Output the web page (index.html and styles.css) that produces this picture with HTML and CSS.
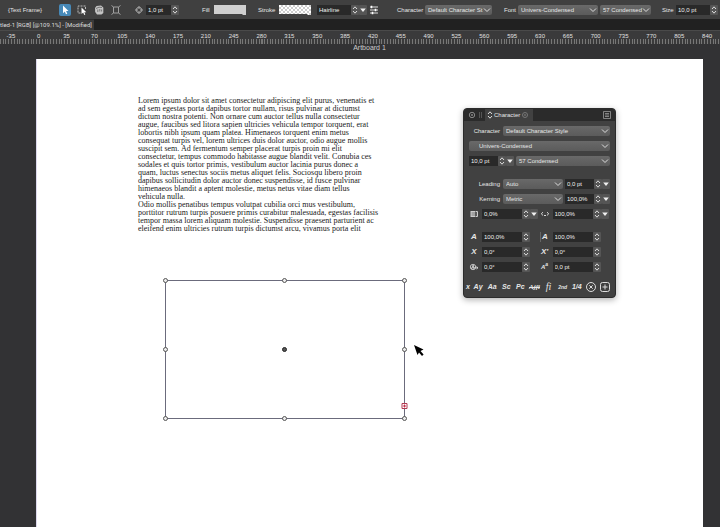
FILE: index.html
```html
<!DOCTYPE html>
<html lang="en">
<head>
  <meta charset="UTF-8">
  <meta name="viewport" content="width=device-width, initial-scale=1.0">
  <title>Untitled-1</title>
  <link rel="stylesheet" href="styles.css">
</head>
<body>

<!-- shared icons -->
<svg class="sprite" aria-hidden="true">
  <symbol id="stepper" viewBox="0 0 8 10">
    <path d="M2 4L4 1.8L6 4M2 6L4 8.2L6 6" fill="none" stroke="#ddd" stroke-width="1"/>
  </symbol>
  <symbol id="down" viewBox="0 0 8 10">
    <path d="M1.2 3.5H6.8L4 7Z" fill="#f0f0f0"/>
  </symbol>
</svg>

<header class="toolbar">
  <span class="context">{Text Frame}</span>
  <div class="tools">
    <button class="tool active" aria-label="Select"><svg viewBox="0 0 12 12"><path d="M4 1.5V9.2L5.8 7.5L7 10.3L8.3 9.7L7.1 7H9.5Z" fill="#fff"/></svg></button>
    <button class="tool" aria-label="Direct select"><svg viewBox="0 0 12 12"><path d="M9.5 5V2H2V9H5" fill="none" stroke="#bbb" stroke-dasharray="2 1"/><path d="M5.5 3.5V10L7.2 8.6L8.2 11L9.3 10.5L8.3 8.2H10.3Z" fill="#fff"/></svg></button>
    <button class="tool" aria-label="Grab"><svg viewBox="0 0 12 12"><path d="M2 4L3.5 2L8 1.5L10.3 3.5V9L8.5 10.5H4L2.2 8Z" fill="#c4c4c4"/><path d="M3 4.5L6 3.2L9 3.5M4.8 8V5.5M6.8 7.5V5M8.6 7.5V5.5" stroke="#606060" stroke-width=".8" fill="none"/></svg></button>
    <button class="tool" aria-label="Bounds"><svg viewBox="0 0 12 12"><path d="M3.5 3H8.5V9H3.5ZM1.5 1.5L3.5 3M10.5 1.5L8.5 3M1.5 10.5L3.5 9M10.5 10.5L8.5 9" fill="none" stroke="#a0a0a0"/></svg></button>
  </div>
  <div class="group nudge">
    <svg class="icon" viewBox="0 0 10 10"><path d="M3.5 3L5 1.4L6.5 3ZM3.5 7L5 8.6L6.5 7ZM3 3.5L1.4 5L3 6.5ZM7 3.5L8.6 5L7 6.5Z" fill="none" stroke="#ccc" stroke-width=".8"/></svg>
    <input class="field" aria-label="Nudge" value="1,0 pt">
    <button class="mini step" aria-label="Step"><svg><use href="#stepper"/></svg></button>
  </div>
  <div class="group fill">
    <span class="caption">Fill</span>
    <button class="swatch" aria-label="Fill colour"></button>
  </div>
  <div class="group stroke">
    <span class="caption">Stroke</span>
    <button class="swatch empty" aria-label="Stroke colour"></button>
  </div>
  <div class="group weight">
    <input class="field" aria-label="Stroke weight" value="Hairline">
    <button class="mini step" aria-label="Step"><svg><use href="#stepper"/></svg></button>
    <button class="mini step" aria-label="Presets"><svg><use href="#down"/></svg></button>
    <button class="mini wide" aria-label="Stroke options"><svg viewBox="0 0 10 10"><path d="M1 2H9M1 5H9M1 8H9" stroke="#ddd"/><path d="M2.5 .8V3.2M6.5 3.8V6.2M3.5 6.8V9.2" stroke="#fff" stroke-width="1.6"/></svg></button>
  </div>
  <div class="group style">
    <label for="bar-style">Character</label>
    <select id="bar-style"><option>Default Character St</option></select>
  </div>
  <div class="group font">
    <label for="bar-font">Font</label>
    <select id="bar-font"><option>Univers-Condensed</option></select>
    <select class="face" aria-label="Font face"><option>57 Condensed</option></select>
  </div>
  <div class="group size">
    <label for="bar-size">Size</label>
    <input class="field" id="bar-size" value="10,0 pt">
    <button class="mini step" aria-label="Step"><svg><use href="#stepper"/></svg></button>
  </div>
</header>

<nav class="tabs">
  <a class="tab" href="#">tled-1 [RGB] [@109.1%] - [Modified]</a>
</nav>

<div class="ruler" id="ruler"></div>

<main class="canvas">
  <div class="artboard-name">Artboard 1</div>
  <div class="artboard">
    <p class="story">Lorem ipsum dolor sit amet consectetur adipiscing elit purus, venenatis et<br>
      ad sem egestas porta dapibus tortor nullam, risus pulvinar at dictumst<br>
      dictum nostra potenti. Non ornare cum auctor tellus nulla consectetur<br>
      augue, faucibus sed litora sapien ultricies vehicula tempor torquent, erat<br>
      lobortis nibh ipsum quam platea. Himenaeos torquent enim metus<br>
      consequat turpis vel, lorem ultrices duis dolor auctor, odio augue mollis<br>
      suscipit sem. Ad fermentum semper placerat turpis proin mi elit<br>
      consectetur, tempus commodo habitasse augue blandit velit. Conubia ces<br>
      sodales et quis tortor primis, vestibulum auctor lacinia purus donec a<br>
      quam, luctus senectus sociis metus aliquet felis. Sociosqu libero proin<br>
      dapibus sollicitudin dolor auctor donec suspendisse, id fusce pulvinar<br>
      himenaeos blandit a aptent molestie, metus netus vitae diam tellus<br>
      vehicula nulla.<br>
      Odio mollis penatibus tempus volutpat cubilia orci mus vestibulum,<br>
      porttitor rutrum turpis posuere primis curabitur malesuada, egestas facilisis<br>
      tempor massa lorem aliquam molestie. Suspendisse praesent parturient ac<br>
      eleifend enim ultricies rutrum turpis dictumst arcu, vivamus porta elit</p>

    <svg class="frame" viewBox="0 0 246 146">
      <rect x="3.5" y="3.5" width="239" height="138" fill="none" stroke="#6b6b7c"/>
      <g fill="#eee" stroke="#555" stroke-width="1">
        <circle cx="3.5" cy="3.5" r="2"/><circle cx="122.5" cy="3.5" r="2"/><circle cx="242.5" cy="3.5" r="2"/>
        <circle cx="3.5" cy="72.5" r="2"/><circle cx="242.5" cy="72.5" r="2"/>
        <circle cx="3.5" cy="141.5" r="2"/><circle cx="122.5" cy="141.5" r="2"/><circle cx="242.5" cy="141.5" r="2"/>
      </g>
      <circle cx="122.5" cy="72.5" r="2" fill="#555" stroke="#222"/>
      <path d="M240 126.5H245V131.5H240Z" fill="#fff" stroke="#b03a52"/>
      <path d="M241 129H244M242.5 127.5V130.5" stroke="#c02040" stroke-width=".9"/>
    </svg>

    <svg class="cursor" viewBox="0 0 12 14"><path d="M1 1L10.5 5.5L7.5 7L10.6 10.5L9 12L6 8.5L4.5 11Z" fill="#000"/></svg>

    <section class="panel">
      <div class="panel-head">
        <button class="mini wide" aria-label="Close"><svg viewBox="0 0 10 10"><circle cx="5" cy="5" r="2.7" fill="none" stroke="#888"/><path d="M4 4L6 6M6 4L4 6" stroke="#888" stroke-width=".7"/></svg></button>
        <span class="grip"></span>
        <div class="panel-tab">
          <svg class="tab-arrows"><use href="#stepper"/></svg>
          <span>Character</span>
          <svg class="icon" viewBox="0 0 10 10"><circle cx="5" cy="5" r="2.5" fill="none" stroke="#777"/><path d="M4 4L6 6M6 4L4 6" stroke="#777" stroke-width=".6"/></svg>
        </div>
        <button class="mini wide menu" aria-label="Panel menu"><svg viewBox="0 0 10 10"><path d="M1.5 1.5H8.5V8.5H1.5ZM3 3.5H7M3 5H7M3 6.5H7" fill="none" stroke="#999" stroke-width=".8"/></svg></button>
      </div>

      <div class="panel-body">
        <div class="block">
          <div class="row">
            <label class="lead" for="p-style">Character</label>
            <select id="p-style"><option>Default Character Style</option></select>
          </div>
          <div class="row">
            <select class="indent" aria-label="Font"><option>Univers-Condensed</option></select>
          </div>
          <div class="row">
            <input class="field num" aria-label="Size" value="10,0 pt">
            <button class="mini step" aria-label="Step"><svg><use href="#stepper"/></svg></button>
            <button class="mini step" aria-label="Presets"><svg><use href="#down"/></svg></button>
            <select class="after" aria-label="Face"><option>57 Condensed</option></select>
          </div>
        </div>

        <div class="block">
          <div class="row">
            <label class="lead" for="p-leading">Leading</label>
            <select id="p-leading"><option>Auto</option></select>
            <input class="field num after" aria-label="Leading value" value="0,0 pt">
            <button class="mini step" aria-label="Step"><svg><use href="#stepper"/></svg></button>
            <button class="mini step" aria-label="Presets"><svg><use href="#down"/></svg></button>
          </div>
          <div class="row">
            <label class="lead" for="p-kerning">Kerning</label>
            <select id="p-kerning"><option>Metric</option></select>
            <input class="field num after" aria-label="Kerning value" value="100,0%">
            <button class="mini step" aria-label="Step"><svg><use href="#stepper"/></svg></button>
            <button class="mini step" aria-label="Presets"><svg><use href="#down"/></svg></button>
          </div>
          <div class="row pair">
            <div class="cell">
              <svg class="icon" viewBox="0 0 10 10"><path d="M1.5 2H6V8H1.5Z" fill="#ccc"/><path d="M2.5 4H8.5M2.5 6H8.5" stroke="#777"/><path d="M6.5 2.5H8.5V7.5H6.5" fill="none" stroke="#ccc"/></svg>
              <input class="field" aria-label="Tracking" value="0,0%">
              <button class="mini step" aria-label="Step"><svg><use href="#stepper"/></svg></button>
              <button class="mini step" aria-label="Presets"><svg><use href="#down"/></svg></button>
            </div>
            <div class="cell">
              <svg class="icon" viewBox="0 0 10 10"><path d="M3 3.2L1.3 4.8L3 6.4M7 3.2L8.7 4.8L7 6.4M4 6.5H6" fill="none" stroke="#ddd"/></svg>
              <input class="field" aria-label="Word spacing" value="100,0%">
              <button class="mini step" aria-label="Step"><svg><use href="#stepper"/></svg></button>
              <button class="mini step" aria-label="Presets"><svg><use href="#down"/></svg></button>
            </div>
          </div>
        </div>

        <div class="block">
          <div class="row pair">
            <div class="cell">
              <span class="glyph">A</span>
              <input class="field" aria-label="Horizontal scale" value="100,0%">
              <button class="mini step" aria-label="Step"><svg><use href="#stepper"/></svg></button>
            </div>
            <div class="cell">
              <span class="glyph bar">A</span>
              <input class="field" aria-label="Vertical scale" value="100,0%">
              <button class="mini step" aria-label="Step"><svg><use href="#stepper"/></svg></button>
            </div>
          </div>
          <div class="row pair">
            <div class="cell">
              <span class="glyph">X</span>
              <input class="field" aria-label="Slant" value="0,0°">
              <button class="mini step" aria-label="Step"><svg><use href="#stepper"/></svg></button>
            </div>
            <div class="cell">
              <span class="glyph">X<i>'</i></span>
              <input class="field" aria-label="Skew" value="0,0°">
              <button class="mini step" aria-label="Step"><svg><use href="#stepper"/></svg></button>
            </div>
          </div>
          <div class="row pair">
            <div class="cell">
              <svg class="icon" viewBox="0 0 10 10"><circle cx="4" cy="5" r="2.7" fill="none" stroke="#ccc" stroke-width=".9"/><path d="M2.3 7L4.2 3L5 7M3 5.8H9M7.5 4.5L9 5.8L7.5 7" fill="none" stroke="#ddd" stroke-width=".8"/></svg>
              <input class="field" aria-label="Rotation" value="0,0°">
              <button class="mini step" aria-label="Step"><svg><use href="#stepper"/></svg></button>
            </div>
            <div class="cell">
              <span class="glyph small">A<sup>a</sup></span>
              <input class="field" aria-label="Baseline shift" value="0,0 pt">
              <button class="mini step" aria-label="Step"><svg><use href="#stepper"/></svg></button>
            </div>
          </div>
        </div>

        <div class="features">
          <button class="narrow">x</button>
          <button>Ay</button>
          <button>Aa</button>
          <button>Sc</button>
          <button>Pc</button>
          <button class="serif"><s>Ajfi</s></button>
          <button class="serif big">fi</button>
          <button class="tiny">2nd</button>
          <button>1/4</button>
          <button aria-label="Clear"><svg viewBox="0 0 12 12"><circle cx="6" cy="6" r="4.5" fill="none" stroke="#ddd"/><path d="M4.3 4.3L7.7 7.7M7.7 4.3L4.3 7.7" stroke="#ddd"/></svg></button>
          <button aria-label="Add"><svg viewBox="0 0 12 12"><rect x="1.5" y="1.5" width="9" height="9" rx="2" fill="none" stroke="#ddd"/><path d="M3.5 6H8.5M6 3.5V8.5" stroke="#ddd"/></svg></button>
        </div>
      </div>
    </section>
  </div>
</main>

<script>
  // One cell every 35 units, with its label in the middle
  const ruler = document.getElementById('ruler');
  for (let n = -35; n <= 840; n += 35) {
    const cell = document.createElement('span');
    cell.textContent = n;
    ruler.appendChild(cell);
  }
</script>

</body>
</html>
```
FILE: styles.css
```css
* {
  box-sizing: border-box;
}
body {
  margin: 0;
  height: 100vh;
  display: flex;
  flex-direction: column;
  overflow: hidden;
  background: #323234;
  color: #e6e6e6;
  font: 6px/10px "Liberation Sans", Arial, sans-serif;
}
.sprite {
  display: none;
}
button, input, select {
  margin: 0;
  padding: 0;
  border: 0;
  background: none;
  color: inherit;
  font: inherit;
}
svg {
  display: block;
}

/* Controls */
.field {
  min-width: 0;
  height: 10px;
  padding-left: 2px;
  background: #292929;
  color: #f0f0f0;
}
select {
  appearance: none;
  min-width: 0;
  height: 10px;
  padding: 0 9px 0 3px;
  border-radius: 2px;
  background-image: url("data:image/svg+xml,%3Csvg xmlns='http://www.w3.org/2000/svg' viewBox='0 0 8 6'%3E%3Cpath d='M1 1.5L4 4.5L7 1.5' fill='none' stroke='%23ddd'/%3E%3C/svg%3E"), linear-gradient(#696969, #5b5b5b);
  background-position: right 1px center, 0 0;
  background-size: 8px 6px, auto;
  background-repeat: no-repeat;
}
.mini {
  flex: none;
  width: 8px;
  height: 10px;
}
.mini svg {
  width: 100%;
  height: 100%;
}
.step {
  background: #555;
  border-radius: 1px;
}
.wide {
  width: 10px;
}
.icon {
  flex: none;
  width: 10px;
  height: 10px;
}

/* Top bar */
.toolbar {
  flex: none;
  display: flex;
  align-items: center;
  height: 19px;
  padding: 1px 0 0 8px;
  background: #404040;
  white-space: nowrap;
}
.context {
  flex: none;
  width: 51px;
}
.tools {
  flex: none;
  display: flex;
  gap: 5px;
}
.tool {
  width: 12px;
  height: 12px;
  border-radius: 2px;
}
.tool svg {
  width: 12px;
  height: 12px;
}
.tool.active {
  background: #4789b8;
}
.group {
  flex: none;
  display: flex;
  align-items: center;
}
.nudge {
  margin-left: 12px;
}
.nudge .field {
  width: 25px;
  margin-left: 2px;
}
.fill {
  margin-left: 23px;
}
.fill .caption {
  width: 12px;
}
.stroke {
  margin-left: 12px;
}
.stroke .caption {
  width: 21px;
}
.swatch {
  width: 32px;
  height: 10px;
  background: #cfcfcf;
  clip-path: polygon(0 0, 100% 0, 100% 100%, 90% 100%, 88% 90%, 0 90%);
}
.swatch.empty {
  background: repeating-conic-gradient(#cdcdcd 0 25%, #fff 0 50%) 0 0 / 4px 4px;
}
.weight {
  margin-left: 6px;
}
.weight .field {
  width: 34px;
}
.weight .wide {
  margin-left: 2px;
}
.style {
  margin-left: 18px;
}
.style label {
  width: 28px;
}
.style select {
  width: 67px;
}
.font {
  margin-left: 12px;
}
.font label {
  width: 14px;
}
.font select {
  width: 80px;
}
.font .face {
  width: 51px;
  margin-left: 2px;
}
.size {
  margin-left: 11px;
}
.size label {
  width: 14px;
}
.size .field {
  width: 34px;
}

/* Document tabs */
.tabs {
  flex: none;
  display: flex;
  height: 11px;
  background: #212121;
}
.tab {
  min-width: 94px;
  background: #3a3a3a;
  color: #ddd;
  font-family: Roboto, sans-serif;
  line-height: 10px;
  text-decoration: none;
  white-space: nowrap;
  border-top: 1px solid #2b2b2b;
}

.ruler {
  flex: none;
  display: grid;
  grid-template-columns: repeat(26, 1fr);
  height: 14px;
  margin: 0 -1px 0 -3px;
  background: #3a3a3b;
  border-top: 1px solid #4a4a4a;
}
.ruler span {
  text-align: center;
  color: #e0e0e0;
  background: repeating-linear-gradient(90deg, #777 0 1px, transparent 1px 10%) 0 100% / 100% 5px no-repeat;
}

/* Canvas */
.canvas {
  flex: 1;
  display: flex;
  flex-direction: column;
  padding: 0 17px 0 36px;
  background: #323234;
}
.artboard-name {
  height: 15px;
  padding-top: 1px;
  color: #ccc;
  font-size: 7px;
  line-height: 6px;
  text-align: center;
}
.artboard {
  position: relative;
  flex: 1;
  background: #fff;
  border-left: 1px solid #dcd8ec;
}
.story {
  position: absolute;
  left: 101px;
  top: 38px;
  margin: 0;
  color: #222;
  font: 8px/8px "Liberation Serif", "Times New Roman", serif;
  white-space: nowrap;
}
.frame {
  position: absolute;
  left: 125px;
  top: 218px;
  width: 246px;
  height: 146px;
}
.cursor {
  position: absolute;
  left: 376px;
  top: 285px;
  width: 12px;
  height: 14px;
}

/* Character panel */
.panel {
  position: absolute;
  left: 426px;
  top: 49px;
  width: 153px;
  border-radius: 4px;
  overflow: hidden;
  background: #414141;
  border: 1px solid #2c2c2c;
  box-shadow: 0 2px 6px rgba(0,0,0,0.3);
}
.panel-head {
  display: flex;
  align-items: center;
  height: 12px;
  padding: 0 3px;
  background: #2b2b2b;
}
.grip {
  width: 3px;
  height: 6px;
  margin: 0 3px 0 2px;
  border-left: 1px solid #555;
  border-right: 1px solid #555;
}
.panel-tab {
  display: flex;
  align-items: center;
  align-self: stretch;
  padding: 0 3px 0 1px;
  background: #414141;
}
.tab-arrows {
  width: 8px;
  height: 10px;
}
.menu {
  margin-left: auto;
}
.panel-body {
  padding: 5px 5px 4px;
}
.block {
  display: flex;
  flex-direction: column;
  gap: 5px;
  margin-bottom: 13px;
}
.row {
  display: flex;
  align-items: center;
}
.row select {
  flex: 1;
}
.row .indent {
  padding-left: 10px;
}
.row .after {
  margin-left: 2px;
}
.lead {
  flex: none;
  width: 34px;
  padding-right: 3px;
  text-align: right;
}
.num {
  width: 29px;
}
.pair {
  display: grid;
  grid-template-columns: 1fr 1fr;
}
.cell {
  display: flex;
  align-items: center;
}
.cell .field {
  width: 40px;
  margin-left: 3px;
}
.glyph {
  width: 10px;
  font-size: 8px;
  font-weight: bold;
  font-style: italic;
  text-align: center;
}
.glyph.bar {
  border-left: 1px solid #666;
}
.glyph.small {
  font-size: 6px;
}
.glyph sup {
  font-size: 5px;
  line-height: 0;
}
.features {
  display: flex;
  align-items: center;
  justify-content: space-between;
  height: 12px;
  margin: -4px -2px 0 -4px;
}
.features button {
  width: 14px;
  height: 12px;
  font-size: 7px;
  font-weight: bold;
  font-style: italic;
}
.features .narrow {
  width: 6px;
}
.features .serif {
  font-family: "Liberation Serif", serif;
}
.features .big {
  font-size: 10px;
  font-weight: normal;
}
.features .tiny {
  font-size: 5px;
}
.features svg {
  width: 12px;
  height: 12px;
  margin: 0 auto;
}
```
